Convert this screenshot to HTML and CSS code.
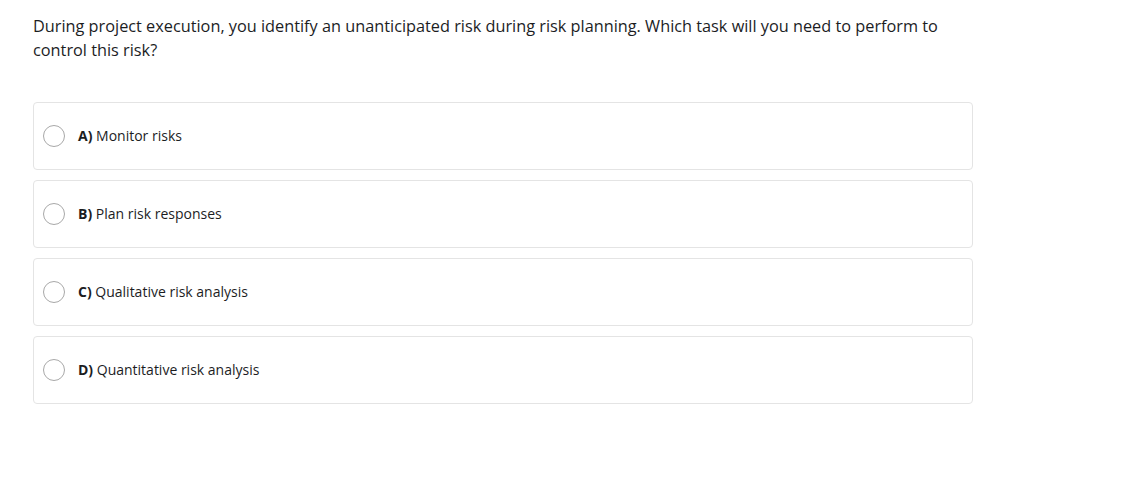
FILE: index.html
```html
<!DOCTYPE html>
<html>
<head>
<meta charset="utf-8">
<link rel="stylesheet" href="styles.css">
</head>
<body>
<div class="quiz">
  <p class="question">During project execution, you identify an unanticipated risk during risk planning. Which task will you need to perform to control this risk?</p>
  <ul class="options">
    <li class="option"><span class="radio"></span><span class="label"><b>A)</b> Monitor risks</span></li>
    <li class="option"><span class="radio"></span><span class="label"><b>B)</b> Plan risk responses</span></li>
    <li class="option"><span class="radio"></span><span class="label"><b>C)</b> Qualitative risk analysis</span></li>
    <li class="option"><span class="radio"></span><span class="label"><b>D)</b> Quantitative risk analysis</span></li>
  </ul>
</div>
</body>
</html>
```
FILE: styles.css
```css
html, body { margin: 0; padding: 0; background: #fff; }
body { font-family: "Open Sans", "Liberation Sans", sans-serif; color: #1c1d1f; }
.quiz { padding: 14px 33px 0 33px; width: 940px; }
.question { margin: 0; font-size: 16.3px; line-height: 24px; width: 920px; }
.options { list-style: none; margin: 40px 0 0 0; padding: 0; display: flex; flex-direction: column; gap: 10px; }
.option { box-sizing: border-box; height: 68px; border: 1px solid #e4e4e4; border-radius: 4px; display: flex; align-items: center; padding-left: 9px; }
.radio { box-sizing: border-box; width: 22px; height: 22px; border: 1px solid #a8a8a8; border-radius: 50%; flex: none; }
.label { margin-left: 13px; font-size: 14px; line-height: 20px; }
.label b { font-weight: 700; }
```
